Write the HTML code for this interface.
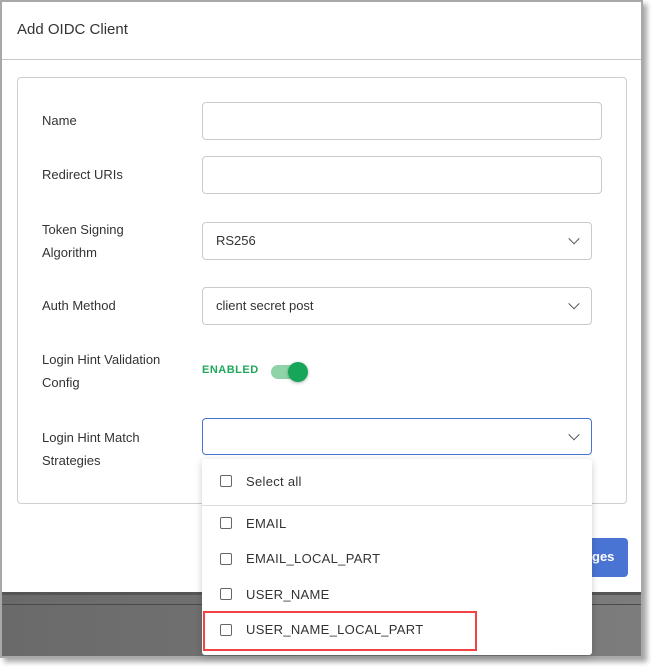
<!DOCTYPE html>
<html><head><style>
*{box-sizing:border-box;margin:0;padding:0}
body{width:652px;height:667px;background:#fff;font-family:"Liberation Sans",sans-serif;position:relative;overflow:hidden}
.frame{position:absolute;left:0;top:0;width:643px;height:658px;border:2px solid #a8a8a8;box-shadow:4px 4px 5px rgba(0,0,0,.35);background:#fff}
.gray{position:absolute;left:0;top:590px;width:639px;height:64px;background:linear-gradient(90deg,#6a6a6a,#7c7c7c);border-top:3px solid #555}
.gray:after{content:"";position:absolute;left:0;top:9px;width:100%;height:1px;background:#4a4a4a}
.title{position:absolute;left:15px;top:19px;font-size:15px;color:#333}
.hdiv{position:absolute;left:0;top:57px;width:639px;height:1px;background:#c8c8c8}
.card{position:absolute;left:15px;top:75px;width:610px;height:427px;border:1px solid #cfcfcf;border-radius:4px}
.lbl{position:absolute;left:42px;font-size:13px;color:#333;line-height:23px}
.inp{position:absolute;left:202px;width:400px;height:38px;border:1px solid #cacaca;border-radius:4px;background:#fff}
.sel{position:absolute;left:202px;width:390px;height:38px;border:1px solid #cacaca;border-radius:4px;background:#fff;font-size:13px;color:#333;padding:10px 13px}
.chev{position:absolute;right:13px;top:16px;width:8px;height:8px;border-right:1.5px solid #555;border-bottom:1.5px solid #555;transform:rotate(45deg) translate(-3px,-3px)}
.btn{position:absolute;left:560px;top:536px;width:66px;height:39px;background:#4a74d4;border-radius:4px;color:#fff;font-weight:bold;font-size:13px;padding:11px 0 0 30px}
.dd{position:absolute;left:202px;top:459px;width:390px;height:196px;background:#fff;box-shadow:0 2px 8px rgba(0,0,0,.2);border-radius:3px}
.it{position:absolute;left:44px;font-size:13px;color:#333;letter-spacing:.3px}
.cb{position:absolute;left:18px;width:12px;height:12px;border:1.5px solid #666;border-radius:2px}
</style></head><body>
<div class="frame">
<div class="title">Add OIDC Client</div>
<div class="hdiv"></div>
<div class="card"></div>
<div class="gray"></div>
<div class="btn">ges</div>
</div>
<div class="lbl" style="top:109px">Name</div>
<div class="inp" style="top:102px"></div>
<div class="lbl" style="top:163px">Redirect URIs</div>
<div class="inp" style="top:156px"></div>
<div class="lbl" style="top:218px">Token Signing<br>Algorithm</div>
<div class="sel" style="top:222px">RS256<div class="chev"></div></div>
<div class="lbl" style="top:294px">Auth Method</div>
<div class="sel" style="top:287px">client secret post<div class="chev"></div></div>
<div class="lbl" style="top:348px">Login Hint Validation<br>Config</div>
<div style="position:absolute;left:202px;top:364px;font-size:11px;font-weight:bold;color:#1fa85a;letter-spacing:.5px">ENABLED</div>
<div style="position:absolute;left:271px;top:365px;width:34px;height:14px;border-radius:7px;background:#8fd4a8"></div>
<div style="position:absolute;left:288px;top:362px;width:20px;height:20px;border-radius:50%;background:#17a55a;box-shadow:0 1px 3px rgba(0,0,0,.3)"></div>
<div class="lbl" style="top:426px">Login Hint Match<br>Strategies</div>
<div class="sel" style="top:418px;border-color:#4a74d4;height:37px"><div class="chev"></div></div>
<div class="dd">
<div class="cb" style="top:16px"></div><div class="it" style="top:15px">Select all</div>
<div style="position:absolute;left:0;top:46px;width:100%;height:1px;background:#ddd"></div>
<div class="cb" style="top:58px"></div><div class="it" style="top:57px">EMAIL</div>
<div class="cb" style="top:94px"></div><div class="it" style="top:92px">EMAIL_LOCAL_PART</div>
<div class="cb" style="top:129px"></div><div class="it" style="top:128px">USER_NAME</div>
<div class="cb" style="top:165px"></div><div class="it" style="top:163px">USER_NAME_LOCAL_PART</div>
</div>
<div style="position:absolute;left:203px;top:611px;width:274px;height:40px;border:2px solid #f04444"></div>
</body></html>
